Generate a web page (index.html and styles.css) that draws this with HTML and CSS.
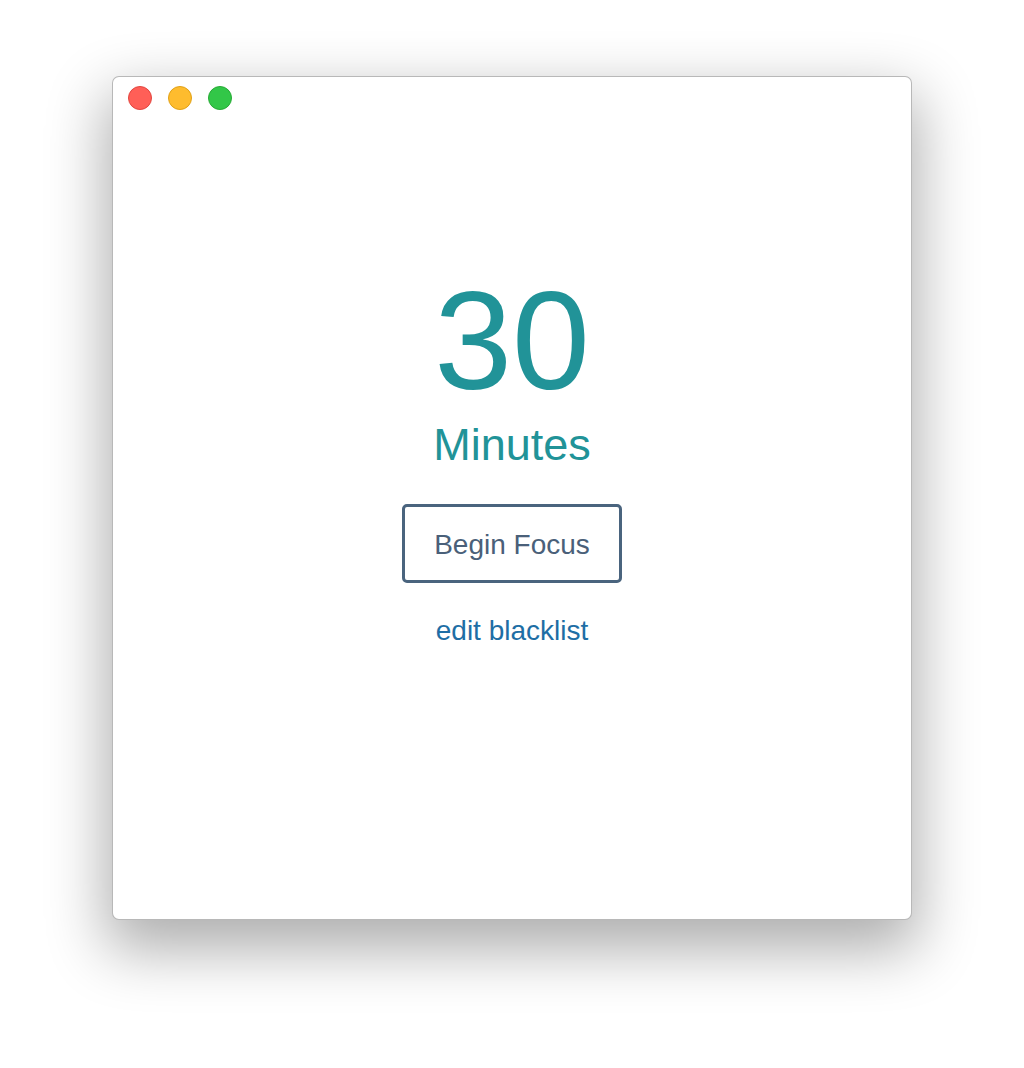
FILE: index.html
```html
<!DOCTYPE html>
<html lang="en">
<head>
    <meta charset="UTF-8">
    <meta name="viewport" content="width=device-width, initial-scale=1.0">
    <title>Focus</title>
    <link rel="stylesheet" href="styles.css">
</head>
<body>
    <div class="desktop">
        <div class="window">
            <!-- 視窗按鈕 -->
            <div class="titlebar">
                <span class="light red"></span>
                <span class="light yellow"></span>
                <span class="light green"></span>
            </div>
            <div class="container">
                <div class="count">30</div>
                <div class="unit">Minutes</div>
                <button type="button" class="begin">Begin Focus</button>
                <a href="#" class="edit">edit blacklist</a>
            </div>
        </div>
    </div>
</body>
</html>
```

FILE: styles.css
```css
body {
    margin: 0;
    background-color: #fff;
    font-family: "Liberation Sans", Arial, sans-serif;
}
.desktop {
    padding: 76px 112px 148px;
}
.window {
    width: 800px;
    height: 844px;
    box-sizing: border-box;
    background-color: #fff;
    border: 1px solid rgba(0, 0, 0, 0.28);
    border-radius: 7px;
    box-shadow: 0 24px 60px 6px rgba(0, 0, 0, 0.32);
    display: flex;
    flex-direction: column;
}
.titlebar {
    display: flex;
    gap: 16px;
    padding: 9px 0 0 15px;
}
.light {
    width: 24px;
    height: 24px;
    border-radius: 50%;
    box-sizing: border-box;
}
.red {
    background-color: #ff5f57;
    border: 1px solid #e2463f;
}
.yellow {
    background-color: #febc2e;
    border: 1px solid #e1a116;
}
.green {
    background-color: #32c748;
    border: 1px solid #27aa35;
}
.container {
    display: flex;
    flex-direction: column;
    align-items: center;
    padding-top: 161px;
}
.count {
    font-size: 140px;
    line-height: 1;
    color: #219398;
}
.unit {
    font-size: 45px;
    line-height: 1;
    color: #219398;
    margin-top: 11px;
}
.begin {
    margin-top: 37px;
    width: 220px;
    height: 79px;
    padding-top: 3px;
    background-color: #fff;
    border: 3px solid #4a647e;
    border-radius: 5px;
    color: #4a6079;
    font-family: inherit;
    font-size: 28px;
    cursor: pointer;
}
.edit {
    margin-top: 32px;
    font-size: 28px;
    color: #1e6ea5;
    text-decoration: none;
}
```
